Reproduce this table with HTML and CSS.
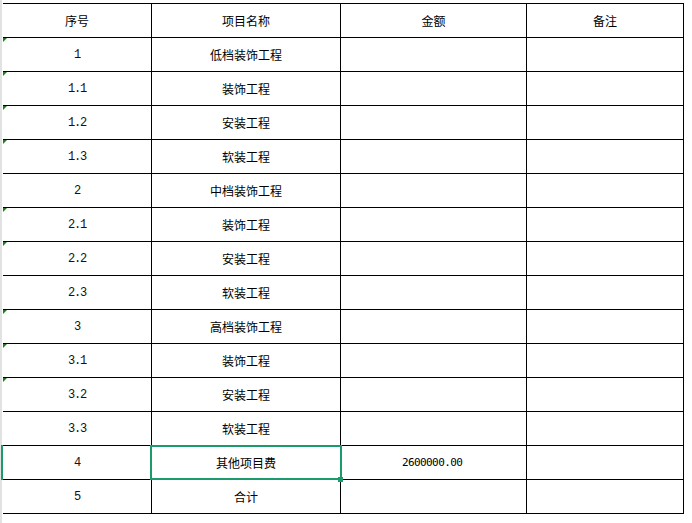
FILE: index.html
```html
<!DOCTYPE html>
<html lang="zh">
<head>
<meta charset="utf-8">
<title>Sheet</title>
<link rel="stylesheet" href="styles.css">
</head>
<body>
<div class="sheet">
  <div class="c hd">序号</div><div class="c hd">项目名称</div><div class="c hd">金额</div><div class="c hd">备注</div>

  <div class="c num mark">1</div><div class="c">低档装饰工程</div><div class="c"></div><div class="c"></div>
  <div class="c num mark">1.1</div><div class="c">装饰工程</div><div class="c"></div><div class="c"></div>
  <div class="c num mark">1.2</div><div class="c">安装工程</div><div class="c"></div><div class="c"></div>
  <div class="c num mark">1.3</div><div class="c">软装工程</div><div class="c"></div><div class="c"></div>
  <div class="c num">2</div><div class="c">中档装饰工程</div><div class="c"></div><div class="c"></div>
  <div class="c num mark">2.1</div><div class="c">装饰工程</div><div class="c"></div><div class="c"></div>
  <div class="c num mark">2.2</div><div class="c">安装工程</div><div class="c"></div><div class="c"></div>
  <div class="c num">2.3</div><div class="c">软装工程</div><div class="c"></div><div class="c"></div>
  <div class="c num mark">3</div><div class="c">高档装饰工程</div><div class="c"></div><div class="c"></div>
  <div class="c num mark">3.1</div><div class="c">装饰工程</div><div class="c"></div><div class="c"></div>
  <div class="c num mark">3.2</div><div class="c">安装工程</div><div class="c"></div><div class="c"></div>
  <div class="c num">3.3</div><div class="c">软装工程</div><div class="c"></div><div class="c"></div>
  <div class="c num rowsel">4</div><div class="c sel">其他项目费<span class="handle"></span></div><div class="c amt">2600000.00</div><div class="c"></div>
  <div class="c num">5</div><div class="c">合计</div><div class="c"></div><div class="c"></div>
</div>
</body>
</html>
```

FILE: styles.css
```css
html, body {
  margin: 0;
  padding: 0;
}
body {
  width: 692px;
  height: 523px;
  overflow: hidden;
  background: linear-gradient(to right, #e2e2e2 0, #e2e2e2 2px, #ffffff 2px);
  font-family: "Noto Sans CJK SC", "Noto Sans", sans-serif;
  font-size: 12px;
  color: #000;
}
.sheet {
  margin: 3px 0 0 3px;
  display: grid;
  grid-template-columns: 149px 189px 186px 157px;
  grid-auto-rows: 34px;
  width: 681px;
  border-top: 1px solid #000;
}
.c {
  box-sizing: border-box;
  border-right: 1px solid #000;
  border-bottom: 1px solid #000;
  display: flex;
  align-items: center;
  justify-content: center;
  position: relative;
  line-height: 1;
}
.num {
  font-family: "Liberation Mono", monospace;
  letter-spacing: -1.2px;
  color: #111;
}
.amt {
  font-family: "DejaVu Sans Mono", monospace;
  font-size: 11px;
  letter-spacing: -0.6px;
  justify-content: flex-start;
  padding-left: 61px;
}
.mark::before {
  content: "";
  position: absolute;
  left: 0;
  top: 0;
  width: 0;
  height: 0;
  border-top: 4px solid #1f7d1f;
  border-right: 4px solid transparent;
}
.rowsel::before {
  content: "";
  position: absolute;
  left: -2px;
  top: -1px;
  width: 2px;
  height: 35px;
  background: #1b9a6c;
}
.sel {
  z-index: 3;
}
.sel::after {
  content: "";
  position: absolute;
  left: -2px;
  top: -1px;
  width: 192px;
  height: 35px;
  box-sizing: border-box;
  border: 2px solid #1b9a6c;
}
.handle {
  position: absolute;
  right: -3px;
  bottom: -3px;
  width: 5px;
  height: 5px;
  background: #1b9a6c;
  z-index: 2;
}
```
